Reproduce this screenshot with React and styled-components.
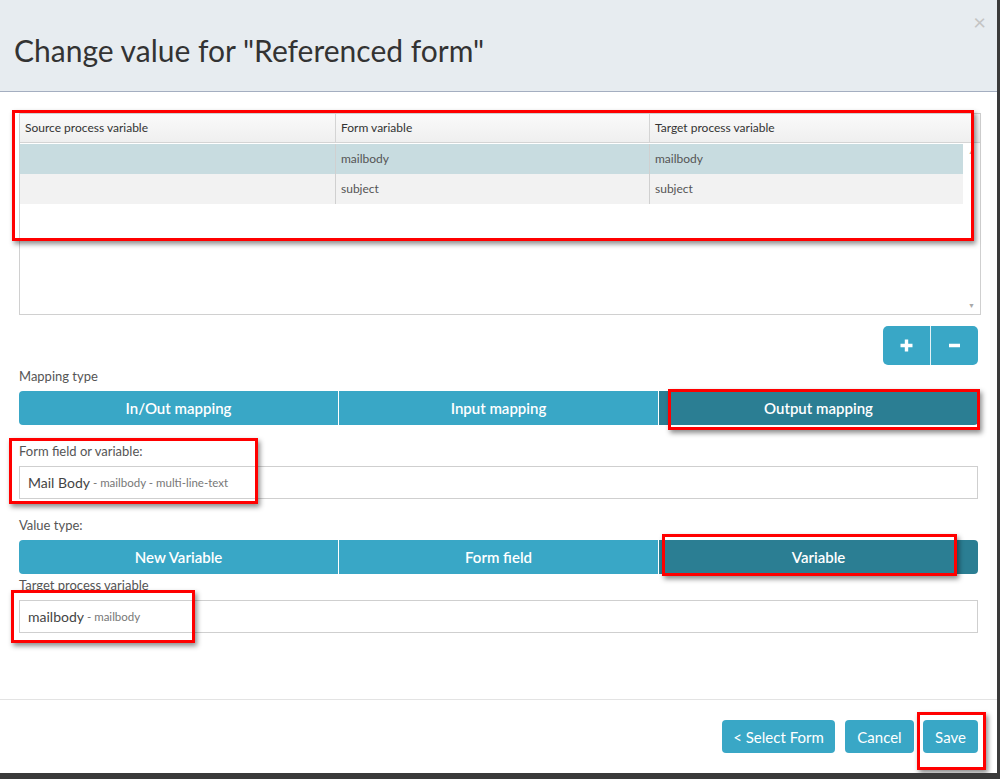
import React from 'react'
import styled, { createGlobalStyle } from 'styled-components'

const Global = createGlobalStyle`
  html, body { margin: 0; padding: 0; }
  body {
    background: #3a3a3a;
    font-family: Lato, "Open Sans", sans-serif;
    color: #333;
  }
`

const Modal = styled.div`
  position: relative;
  width: 997px;
  height: 773px;
  background: #fff;
  display: flex;
  flex-direction: column;
  box-sizing: border-box;
`

const Header = styled.div`
  height: 92px;
  box-sizing: border-box;
  background: #e7ecf0;
  border-bottom: 1px solid #a4aec0;
  display: flex;
  justify-content: space-between;
  align-items: flex-start;
  padding: 0 14px;
`

const Title = styled.h1`
  margin: 31px 0 0;
  font-size: 30px;
  font-weight: 400;
  line-height: 38px;
  color: #333;
`

const Close = styled.span`
  margin-top: 9px;
  margin-right: -3px;
  font-size: 22px;
  line-height: 26px;
  color: #c4c4c4;
`

const Body = styled.div`
  flex: 1;
  padding: 21px 19px 0;
  display: flex;
  flex-direction: column;
`

const Grid = styled.div`
  height: 202px;
  margin-right: -3px;
  box-sizing: border-box;
  border: 1px solid #d0d0d0;
  display: flex;
  flex-direction: column;
`

const HeadRow = styled.div`
  display: grid;
  grid-template-columns: 315px 314px 1fr;
  height: 29px;
  box-sizing: border-box;
  background: linear-gradient(#fafafa, #efefef);
  border-bottom: 1px solid #d4d4d4;
`

const HeadCell = styled.div`
  font-size: 12px;
  line-height: 28px;
  padding-left: 5px;
  color: #333;
  border-left: ${p => (p.$first ? 'none' : '1px solid #d4d4d4')};
`

const GridBody = styled.div`
  flex: 1;
  display: flex;
  padding-top: 1px;
`

const Rows = styled.div`
  flex: 1;
`

const Row = styled.div`
  display: grid;
  grid-template-columns: 315px 314px 1fr;
  height: 30px;
  background: ${p => (p.$selected ? '#c8dce0' : '#f2f2f2')};
`

const Cell = styled.div`
  font-size: 12px;
  line-height: 30px;
  padding-left: 5px;
  color: #555;
  border-left: ${p => (p.$first ? 'none' : '1px solid #d0d0d0')};
`

const Scroll = styled.div`
  width: 17px;
  display: flex;
  flex-direction: column;
  justify-content: space-between;
  align-items: center;
  padding: 3px 0 5px;
  color: #a8a8a8;
  font-size: 7px;
`

const Tools = styled.div`
  display: flex;
  justify-content: flex-end;
  margin-top: 11px;
`

const ToolGroup = styled.div`
  display: flex;
  border-radius: 5px;
  overflow: hidden;
`

const ToolButton = styled.button`
  width: 47px;
  height: 39px;
  border: none;
  background: #39a7c6;
  color: #fff;
  display: flex;
  align-items: center;
  justify-content: center;
  padding: 0;
  & + & { border-left: 1px solid #e3f2f6; width: 48px; }
`

const Label = styled.div`
  font-size: 13px;
  line-height: 18px;
  color: #555;
  margin-top: ${p => p.$top || 0}px;
  margin-bottom: ${p => p.$bottom || 6}px;
`

const Segments = styled.div`
  display: grid;
  grid-template-columns: 1fr 1fr 1fr;
  gap: 1px;
  height: 34px;
  border-radius: 4px;
  overflow: hidden;
`

const Segment = styled.div`
  background: ${p => (p.$active ? '#2b7e93' : '#39a7c6')};
  color: #fff;
  font-size: 15px;
  font-weight: 600;
  display: flex;
  align-items: center;
  justify-content: center;
`

const Field = styled.div`
  height: 33px;
  box-sizing: border-box;
  border: 1px solid #cfcfcf;
  padding: 0 8px;
  display: flex;
  align-items: center;
  font-size: 14px;
  color: #444;
`

const Hint = styled.span`
  font-size: 11.5px;
  color: #777;
  margin-left: 3px;
`

const Footer = styled.div`
  height: 74px;
  box-sizing: border-box;
  border-top: 1px solid #e3e3e3;
  display: flex;
  justify-content: flex-end;
  align-items: flex-start;
  padding: 20px 19px 0;
`

const FootButton = styled.button`
  height: 33px;
  border: none;
  border-radius: 4px;
  background: #39a7c6;
  color: #fff;
  font-family: Lato, sans-serif;
  font-size: 15px;
  width: ${p => p.$w}px;
  padding: 0;
  margin-left: ${p => p.$gap || 0}px;
`

const Mark = styled.div`
  position: absolute;
  box-sizing: border-box;
  border: 3px solid #ff0000;
  box-shadow: 2px 3px 5px rgba(0, 0, 0, 0.45);
  pointer-events: none;
`

const marks = [
  { left: 12, top: 110, width: 962, height: 131 },
  { left: 668, top: 389, width: 312, height: 41 },
  { left: 9, top: 438, width: 249, height: 66 },
  { left: 662, top: 534, width: 295, height: 42 },
  { left: 11, top: 590, width: 184, height: 53 },
  { left: 917, top: 712, width: 69, height: 58 },
]

const rows = [
  { form: 'mailbody', target: 'mailbody', selected: true },
  { form: 'subject', target: 'subject' },
]

export default function App() {
  return (
    <>
      <Global />
      <Modal>
        <Header>
          <Title>Change value for "Referenced form"</Title>
          <Close>×</Close>
        </Header>
        <Body>
          <Grid>
            <HeadRow>
              <HeadCell $first>Source process variable</HeadCell>
              <HeadCell>Form variable</HeadCell>
              <HeadCell>Target process variable</HeadCell>
            </HeadRow>
            <GridBody>
              <Rows>
                {rows.map(r => (
                  <Row key={r.form} $selected={r.selected}>
                    <Cell $first></Cell>
                    <Cell>{r.form}</Cell>
                    <Cell>{r.target}</Cell>
                  </Row>
                ))}
              </Rows>
              <Scroll>
                <span>▲</span>
                <span>▼</span>
              </Scroll>
            </GridBody>
          </Grid>

          <Tools>
            <ToolGroup>
              <ToolButton>
                <svg width="15" height="15" viewBox="0 0 15 15">
                  <path d="M7.5 1.5v12M1.5 7.5h12" stroke="#fff" strokeWidth="3.4" />
                </svg>
              </ToolButton>
              <ToolButton>
                <svg width="15" height="15" viewBox="0 0 15 15">
                  <path d="M2 7.5h11" stroke="#fff" strokeWidth="3.4" />
                </svg>
              </ToolButton>
            </ToolGroup>
          </Tools>

          <Label $top={2}>Mapping type</Label>
          <Segments>
            <Segment>In/Out mapping</Segment>
            <Segment>Input mapping</Segment>
            <Segment $active>Output mapping</Segment>
          </Segments>

          <Label $top={17}>Form field or variable:</Label>
          <Field>
            Mail Body<Hint>- mailbody - multi-line-text</Hint>
          </Field>

          <Label $top={17}>Value type:</Label>
          <Segments>
            <Segment>New Variable</Segment>
            <Segment>Form field</Segment>
            <Segment $active>Variable</Segment>
          </Segments>

          <Label $top={2} $bottom={6}>Target process variable</Label>
          <Field>
            mailbody<Hint>- mailbody</Hint>
          </Field>
        </Body>
        <Footer>
          <FootButton $w={113}>&lt; Select Form</FootButton>
          <FootButton $w={69} $gap={10}>Cancel</FootButton>
          <FootButton $w={55} $gap={9}>Save</FootButton>
        </Footer>
        {marks.map((m, i) => (
          <Mark key={i} style={m} />
        ))}
      </Modal>
    </>
  )
}
